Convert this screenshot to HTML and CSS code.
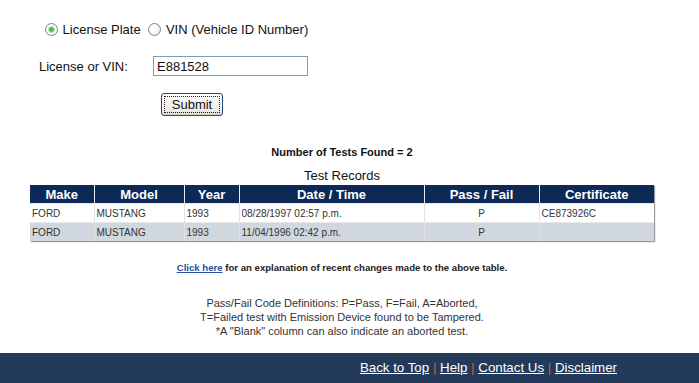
FILE: index.html
```html
<!DOCTYPE html>
<html lang="en">
<head>
<meta charset="UTF-8">
<meta name="viewport" content="width=device-width, initial-scale=1.0">
<title>Vehicle Test Records</title>
<link rel="stylesheet" href="styles.css">
</head>
<body>
<div class="content">
    <form class="lookup">
        <div class="choice">
            <label><input type="radio" name="kind" checked> License Plate</label>
            <label><input type="radio" name="kind"> VIN (Vehicle ID Number)</label>
        </div>
        <div class="field">
            <label for="plate">License or VIN:</label>
            <input type="text" id="plate" value="E881528">
        </div>
        <div class="actions">
            <button type="button">Submit</button>
        </div>
    </form>

    <div class="found">Number of Tests Found = 2</div>
    <div class="caption">Test Records</div>
    <table class="records">
        <colgroup>
            <col class="c-make">
            <col class="c-model">
            <col class="c-year">
            <col class="c-date">
            <col class="c-pass">
            <col class="c-cert">
        </colgroup>
        <thead>
            <tr>
                <th>Make</th>
                <th>Model</th>
                <th>Year</th>
                <th>Date / Time</th>
                <th>Pass / Fail</th>
                <th>Certificate</th>
            </tr>
        </thead>
        <tbody>
            <tr>
                <td>FORD</td>
                <td>MUSTANG</td>
                <td>1993</td>
                <td>08/28/1997 02:57 p.m.</td>
                <td class="mid">P</td>
                <td>CE873926C</td>
            </tr>
            <tr class="alt">
                <td>FORD</td>
                <td>MUSTANG</td>
                <td>1993</td>
                <td>11/04/1996 02:42 p.m.</td>
                <td class="mid">P</td>
                <td></td>
            </tr>
        </tbody>
    </table>

    <p class="note"><a href="#">Click here</a> for an explanation of recent changes made to the above table.</p>

    <p class="legend">
        Pass/Fail Code Definitions: P=Pass, F=Fail, A=Aborted,<br>
        T=Failed test with Emission Device found to be Tampered.<br>
        *A "Blank" column can also indicate an aborted test.
    </p>
</div>
<div class="footer">
    <a href="#">Back to Top</a> <span class="sep">|</span>
    <a href="#">Help</a> <span class="sep">|</span>
    <a href="#">Contact Us</a> <span class="sep">|</span>
    <a href="#">Disclaimer</a>
</div>
</body>
</html>
```

FILE: styles.css
```css
body {
    margin: 0;
    font-family: "Liberation Sans", Arial, sans-serif;
    background-color: white;
    color: #111;
}
.content {
    width: 684px;
}
.lookup {
    margin: 0;
    font-size: 13px;
}
.choice {
    padding: 22px 0 0 44px;
    height: 16px;
    line-height: 16px;
}
.choice label {
    margin-right: 3px;
}
.choice input {
    appearance: none;
    -webkit-appearance: none;
    width: 13px;
    height: 13px;
    margin: 0 1px 0 1px;
    vertical-align: -2px;
    border: 1px solid #6e8aa6;
    border-radius: 50%;
    background: radial-gradient(circle at 40% 40%, #ffffff 30%, #dcdcd4 100%);
}
.choice input:checked {
    background: radial-gradient(circle, #3fa83a 0, #64c05d 2px, #b8dfb0 3px, #ffffff 4px, #e4e4dc 100%);
}
.field {
    display: flex;
    align-items: center;
    padding: 18px 0 0 39px;
}
.field label {
    width: 114px;
}
.field input {
    width: 155px;
    height: 20px;
    box-sizing: border-box;
    border: 1px solid #7f9db9;
    padding: 1px 3px;
    font: 13px "Liberation Sans", Arial, sans-serif;
    color: #111;
}
.actions {
    padding: 17px 0 0 161px;
}
.actions button {
    width: 62px;
    height: 23px;
    padding: 0;
    font: 13px "Liberation Sans", Arial, sans-serif;
    color: #111;
    background: linear-gradient(#ffffff, #ecebe6 80%, #d6d0c5);
    border: 1px solid #1f4a7a;
    border-radius: 3px;
    outline: 1px dotted #222;
    outline-offset: -4px;
}
.found {
    margin-top: 29px;
    text-align: center;
    font-size: 11px;
    font-weight: bold;
    line-height: 14px;
}
.caption {
    margin-top: 9px;
    text-align: center;
    font-size: 13px;
    line-height: 16px;
}
.records {
    width: 624px;
    margin: 1px 0 0 30px;
    table-layout: fixed;
    border-collapse: collapse;
    box-shadow: 1px 1px 1px #9a9a9a;
}
.c-make { width: 64px; }
.c-model { width: 90px; }
.c-year { width: 55px; }
.c-date { width: 185px; }
.c-pass { width: 115px; }
.c-cert { width: 115px; }
.records th {
    height: 18px;
    padding: 0;
    background-color: #0d2957;
    color: white;
    font-size: 13px;
    font-weight: bold;
    border-left: 1px solid #e8ecf2;
}
.records th:first-child {
    border-left: none;
}
.records td {
    height: 18px;
    padding: 0 2px;
    font-size: 10px;
    color: #333;
    border-left: 1px solid #e2e2dc;
    border-top: 1px solid #e8e8e8;
}
.records td:first-child {
    border-left: none;
}
.records tr.alt td {
    background-color: #d1d7df;
}
.records td.mid {
    text-align: center;
}
.note {
    margin: 21px 0 0 0;
    text-align: center;
    font-size: 9.6px;
    font-weight: bold;
    color: #222;
}
.note a {
    color: #2b4ea6;
}
.legend {
    margin: 23px 0 0 0;
    text-align: center;
    font-size: 11px;
    line-height: 14px;
    color: #333;
}
.footer {
    margin-top: 15px;
    height: 40px;
    padding: 7px 82px 0 0;
    box-sizing: border-box;
    background-color: #243a5b;
    text-align: right;
    font-size: 13.3px;
    color: white;
}
.footer a {
    color: white;
}
.sep {
    color: #c8603c;
}
```
